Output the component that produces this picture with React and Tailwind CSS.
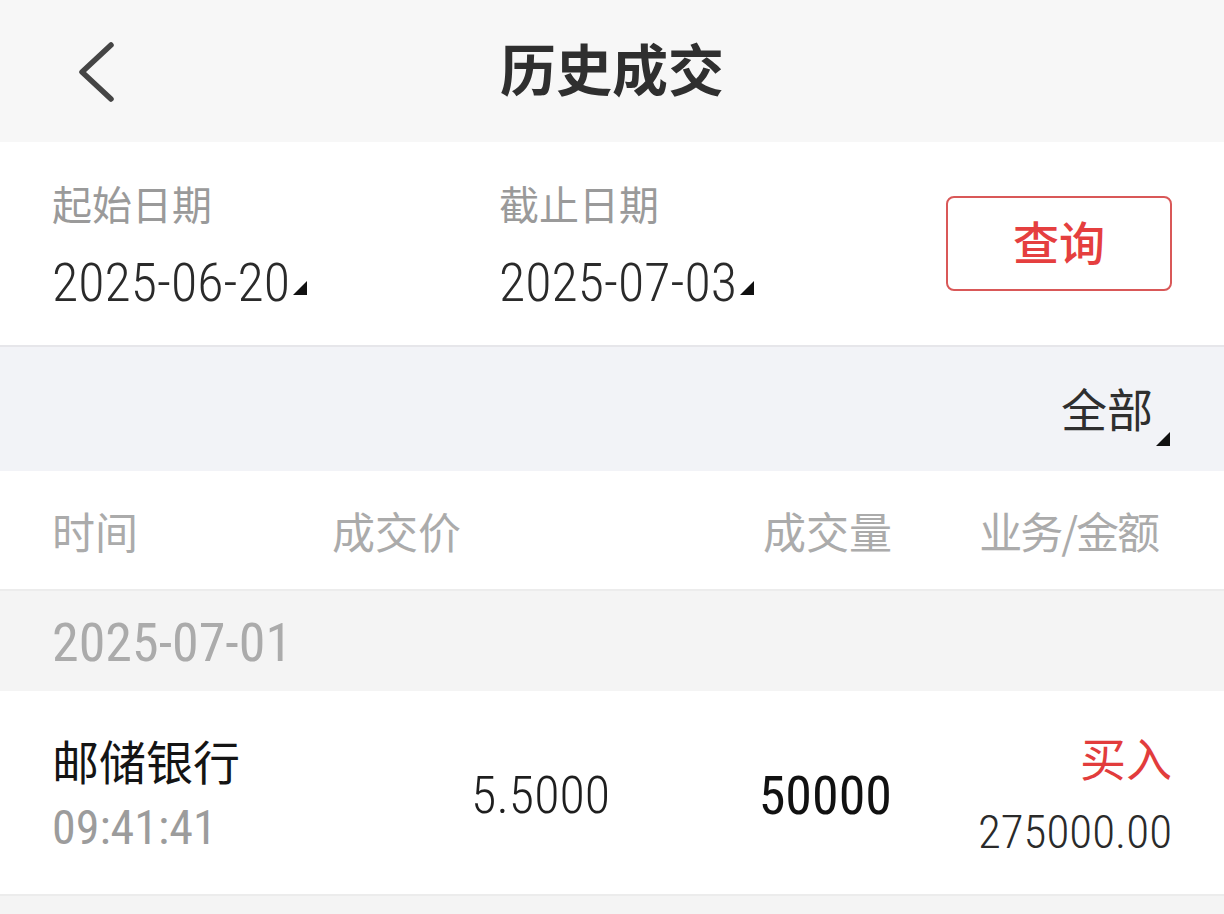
const NUM = { fontFamily: '"Roboto Condensed", Roboto, "Noto Sans CJK SC", sans-serif' };
const CJK = { fontFamily: 'Roboto, "Noto Sans CJK SC", sans-serif' };
const CJK_ONLY = { fontFamily: '"Noto Sans CJK SC", sans-serif' };

function Corner({ className = '' }) {
  return (
    <svg width="14" height="14" viewBox="0 0 14 14" className={`inline-block ${className}`}>
      <polygon points="14,0 14,14 0,14" fill="#111" />
    </svg>
  );
}

function DateField({ label, value }) {
  return (
    <div className="flex flex-col">
      <div style={CJK} className="text-[40px] leading-[48px] text-[#9a9a9a]">{label}</div>
      <div style={NUM} className="mt-[24px] text-[54px] leading-[56px] font-light text-[#2a2a2a] whitespace-nowrap">
        {value}
        <Corner className="ml-[3px] mb-[-3px]" />
      </div>
    </div>
  );
}

export default function App() {
  return (
    <div className="min-h-screen bg-[#f4f4f4]">
      {/* Header */}
      <div className="h-[142px] bg-[#f7f7f7] flex items-center">
        <div className="w-[200px] pl-[78px] pt-[2px]">
          <svg width="40" height="62" viewBox="0 0 40 62">
            <polyline points="33,4 4,31 33,58" fill="none" stroke="#454545" strokeWidth="5.5" strokeLinecap="round" strokeLinejoin="round" />
          </svg>
        </div>
        <h1 style={CJK} className="flex-1 text-center text-[56px] leading-none font-bold text-[#2f2f2f] pt-[2px]">历史成交</h1>
        <div className="w-[200px]" />
      </div>

      {/* Date filter */}
      <div className="h-[205px] bg-white px-[52px] flex items-center border-b-2 border-[#e6e6ea]">
        <div className="w-[447px] pt-[6px]">
          <DateField label="起始日期" value="2025-06-20" />
        </div>
        <div className="flex-1 pt-[6px]">
          <DateField label="截止日期" value="2025-07-03" />
        </div>
        <button
          style={CJK}
          className="w-[226px] h-[95px] rounded-[8px] border-[2.5px] border-[#d95858] text-[#e53f3f] text-[46px] font-medium flex items-center justify-center pt-[2px]"
        >
          查询
        </button>
      </div>

      {/* Type filter */}
      <div className="h-[124px] bg-[#f2f3f7] flex items-center justify-end pr-[54px] pt-[4px]">
        <div className="flex items-end">
          <span style={CJK} className="text-[46px] leading-[52px] text-[#2f2f2f]">全部</span>
          <Corner className="ml-[3px] mb-[-9px]" />
        </div>
      </div>

      {/* Column headers */}
      <div style={CJK_ONLY} className="h-[120px] bg-white px-[52px] grid grid-cols-4 items-center text-[43px] leading-[50px] text-[#ababab] border-b-2 border-[#ececec]">
        <div>时间</div>
        <div>成交价</div>
        <div className="text-right">成交量</div>
        <div className="text-right pr-[14px] tracking-[-2px]">业务/金额</div>
      </div>

      {/* Date group */}
      <div className="h-[100px] bg-[#f4f4f4] px-[52px] flex items-center pt-[3px]">
        <span style={NUM} className="text-[54px] leading-[56px] text-[#ababab]">2025-07-01</span>
      </div>

      {/* Trade row */}
      <div className="h-[205px] bg-white px-[52px] grid grid-cols-4 items-center border-b-2 border-[#ececec] pt-[6px]">
        <div className="flex flex-col">
          <span style={CJK} className="text-[47px] leading-[48px] text-[#141414]">邮储银行</span>
          <span style={NUM} className="mt-[16px] text-[48px] leading-[48px] text-[#9c9c9c]">09:41:41</span>
        </div>
        <div style={NUM} className="text-right text-[52px] leading-[56px] font-light text-[#1e1e1e] pr-[2px]">5.5000</div>
        <div style={NUM} className="text-right text-[54px] leading-[56px] text-[#111]">50000</div>
        <div className="flex flex-col items-end">
          <span style={CJK} className="text-[46px] leading-[48px] text-[#e23c3c]">买入</span>
          <span style={NUM} className="mt-[24px] text-[47px] leading-[48px] font-light text-[#2a2a2a]">275000.00</span>
        </div>
      </div>
    </div>
  );
}
